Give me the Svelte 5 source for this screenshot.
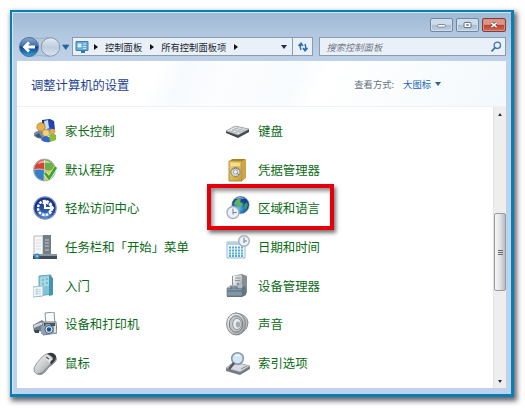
<script>
  // Control panel window, large icon view
  const crumbs = ['控制面板', '所有控制面板项'];
  const left = [
    { icon: 'family', label: '家长控制' },
    { icon: 'programs', label: '默认程序' },
    { icon: 'access', label: '轻松访问中心' },
    { icon: 'taskbar', label: '任务栏和「开始」菜单' },
    { icon: 'start', label: '入门' },
    { icon: 'printer', label: '设备和打印机' },
    { icon: 'mouse', label: '鼠标' }
  ];
  const right = [
    { icon: 'keyboard', label: '键盘' },
    { icon: 'vault', label: '凭据管理器' },
    { icon: 'region', label: '区域和语言', marked: true },
    { icon: 'date', label: '日期和时间' },
    { icon: 'device', label: '设备管理器' },
    { icon: 'sound', label: '声音' },
    { icon: 'index', label: '索引选项' }
  ];
</script>

{#snippet clock(x, y, r)}
  <circle cx={x} cy={y} {r} fill="#edf1f6" stroke="#a4b0be" stroke-width="1.4" />
  <path d="M{x} {y - r + 2}V{y}H{x + r - 2.4}M{x} {y}V{y + 2}" fill="none" stroke="#68819c" stroke-width="1" />
{/snippet}

{#snippet icon(name)}
  <svg class="icon" viewBox="0 0 24 24" aria-hidden="true">
    {#if name === 'family'}
      <path d="M9 1l8-1 4 2 1 9-5 4-8-3z" fill="url(#blue)" />
      <path d="M15 1l5 1 1 7-3 2z" fill="#2444b5" />
      <path d="M11 2l4-1 1 8-4 2z" fill="#c9dcfa" />
      <circle cx="8" cy="8" r="4.2" fill="#e6b24a" stroke="#b27a1c" stroke-width=".7" />
      <path d="M1 14q4-4 10-1l1 7q-6 1-11-3z" fill="#7e8ca5" />
      <path d="M2 16l4-2 3 5-5-.5z" fill="#465775" />
      <circle cx="13" cy="14" r="3.4" fill="#f2d37b" stroke="#c79434" stroke-width=".6" />
      <circle cx="19.5" cy="12.5" r="2.8" fill="#e4a557" />
      <path d="M9 19q4-4 8 0v4q-5 1-9-2z" fill="#3465c7" />
      <path d="M16 16q4-3 7 0v5l-6 2z" fill="#88bd34" />
    {:else if name === 'programs'}
      <circle cx="11.5" cy="12" r="11" fill="#b9c5c4" stroke="#8d9a9d" stroke-width=".7" />
      <path d="M11 1.6A10.4 10.4 0 0 0 1.2 11.5q5-2 9.8 0z" fill="#d9432e" />
      <path d="M12 1.6a10.4 10.4 0 0 1 9.7 9.4q-5 2.5-9.7.5z" fill="#6eae43" />
      <path d="M1.2 12.5a10.4 10.4 0 0 0 9.3 10l.5-10q-5-2-9.8 0z" fill="#377fc5" />
      <path d="M12 12.5q5 2 9.8-.5-1 9-9.8 10.5z" fill="#f0c62e" />
      <path d="M4 6q7-7 14-1-7-1-14 1z" fill="#fff" opacity=".55" />
      <path d="M12 15l4 5 7-11" fill="none" stroke="#e9f5df" stroke-width="4" />
      <path d="M12 15l4 5 7-11" fill="none" stroke="#38a52d" stroke-width="2.8" />
    {:else if name === 'access'}
      <circle cx="12" cy="12" r="11.2" fill="url(#blue)" stroke="#8594ba" stroke-width="1.2" />
      <circle cx="12" cy="12" r="7" fill="none" stroke="#fff" stroke-width="2.4" stroke-dasharray="2.6 1.2" />
      <circle cx="12" cy="12" r="5" fill="#234da3" opacity=".7" />
      <path d="M12 5v7h8M16 8l4 4-4 4M10 8l2-3 3 3" fill="none" stroke="#fff" stroke-width="2" />
    {:else if name === 'taskbar'}
      <path d="M1 1h9v19H1z" fill="#f5f6f7" stroke="#b5bbc0" />
      <path d="M10 0h8v20h-8z" fill="#747e86" />
      <path d="M3 5h5M3 8h5M3 11h5M3 14h5" stroke="#dde1e4" />
      <path d="M12 5h4M12 8h4M12 11h4M12 15h4" stroke="#c4cace" />
      <path d="M0 19h24v5H0z" fill="#414d59" />
      <path d="M0 19h24v2H0z" fill="#8a969e" />
      <circle cx="4" cy="21.3" r="2.7" fill="#2783be" />
      <path d="M2.8 21h2.4M4 20v2.5" stroke="#e6f5ff" stroke-width=".7" />
    {:else if name === 'start'}
      <path d="M6 2l12-1v19l-12 2z" fill="#7fc4d8" stroke="#68a6b9" />
      <path d="M7 3l9-1v10l-9 1z" fill="#a5d7e4" />
      <path d="M16 1l4 3v17l-4 1z" fill="#4695ae" />
      <path d="M9 5h2v2H9zm4-1h2v2h-2zM9 9h2v2H9zm4-1h2v2h-2z" fill="#7bbccb" />
      <path d="M0 13l10-1v10l-10 1z" fill="#f1f8fa" stroke="#9ebbc5" />
      <path d="M2 16l6-.5M2 18l6-.5M2 20l6-.5M4 14v7" stroke="#b4ced8" stroke-width=".8" />
    {:else if name === 'printer'}
      <path d="M12 1l9-1 1 12-9 1z" fill="#f8fafc" stroke="#8a949c" />
      <path d="M0 13l9-5 4 4-3 7-9 1z" fill="#727c86" />
      <path d="M1 13l8-3 2 2-10 4z" fill="#cdd3d8" />
      <path d="M10 10h13l1 11-14 2z" fill="#dce2e7" stroke="#6e7882" />
      <path d="M11 11h11v3H11z" fill="#46525e" />
      <path d="M8 14h4l1-2h4l1 2h3v8H8z" fill="#8fa3b3" />
      <circle cx="16" cy="17.5" r="4" fill="#d9e8f3" stroke="#4c5d6c" />
      <circle cx="16" cy="17.5" r="2.2" fill="#15529a" />
      <path d="M1 18h5v3H2z" fill="#384855" />
    {:else if name === 'mouse'}
      <path d="M1 17Q3 12 9 6q6-6 12-2 5 4 0 8-6 4-9 9-3 4-8 2-4-2-3-6z" fill="url(#silver)" stroke="#777" stroke-width=".7" />
      <path d="M14 3q5-3 8.5 1 2 4-2.5 8l-3 3q1-3 0-5l3-3q-3-3-6-4z" fill="#383c42" />
      <path d="M10 7l4-3 6 4-4 4q-2-4-6-5z" fill="#dfe1e3" />
      <path d="M13 6l3 2" stroke="#555c63" stroke-width="1.5" />
      <path d="M5 23q4 0 7-4l6-6" fill="none" stroke="#8d8d8f" stroke-width="1.3" />
    {:else if name === 'keyboard'}
      <path d="M0 12l9-5 14 3v3L12 19 0 14z" fill="#44484d" />
      <path d="M0 12l9-5 14 3-11 6z" fill="#e2e4e6" stroke="#969ba0" stroke-width=".6" />
      <path d="M3 12l9 2.5M6 10.5l9 2.5M8 9l10 2.5M5 13l8-5M9 14l8-5M13 14l7-4" stroke="#9da2a8" stroke-width=".6" />
    {:else if name === 'vault'}
      <path d="M3 4l3-3h13v19l-3 3H3z" fill="#a9802a" />
      <path d="M3 3h13v20H3z" fill="url(#gold)" stroke="#b18b34" />
      <path d="M16 3l4-2v19l-4 3z" fill="#cba647" />
      <path d="M5 5h9v3H5z" fill="#f4dd8c" />
      <circle cx="9.5" cy="14" r="4.6" fill="#d9d8d0" stroke="#838384" />
      <path d="M6.5 11.5q3-3 6 0M9.5 14l3.5 3" fill="none" stroke="#777d84" />
      <circle cx="9.5" cy="14" r="2" fill="#f4f5ef" stroke="#8d9194" stroke-width=".7" />
    {:else if name === 'region'}
      <circle cx="14.5" cy="9" r="8.6" fill="url(#globe)" stroke="#3772ae" stroke-width=".6" />
      <path d="M9 5q3-3 6-2l-1 3 3 2-2 3-4-1-3-2z" fill="#62b15b" />
      <path d="M20.5 6l1.5 3-2 5-2-2 1-4z" fill="#3b9b5d" />
      <path d="M9 3q5-4 10 0-5-1-10 0z" fill="#fff" opacity=".6" />
      {@render clock(7, 16.5, 6)}
    {:else if name === 'date'}
      <path d="M1 7h18v16H1z" fill="#f2f9fd" stroke="#9ab8c9" />
      <path d="M1 7h18v3H1z" fill="#b8cfdc" />
      <path d="M3 12.5h14M3 15.5h14M3 18.5h14M3 21h14" stroke="#52aed0" stroke-width="2" stroke-dasharray="2 1" />
      {@render clock(18, 6, 5.3)}
    {:else if name === 'device'}
      <path d="M6 2l10-2 5 2v17l-5 3H6z" fill="#848e94" />
      <path d="M7 2l9-1v18H7z" fill="url(#silver)" />
      <path d="M9 4h5M9 6.5h5" stroke="#8e979d" />
      <circle cx="12" cy="10" r="1" fill="#6b757d" />
      <path d="M1 14l4-3h12l3 3v7l-4 2H1z" fill="#647582" />
      <path d="M1 14h15v8H1z" fill="#8298a7" stroke="#60717e" stroke-width=".6" />
      <path d="M1 14l4-3h12l-1 3z" fill="#aebcc6" />
      <path d="M5 15v-2h6v2M1 17h15" fill="none" stroke="#566876" stroke-width="1.1" />
    {:else if name === 'sound'}
      <path d="M9 1q12 1 13 9 0 9-10 13z" fill="#b7babd" stroke="#888d91" />
      <ellipse cx="10" cy="12" rx="9.4" ry="11" fill="url(#silver)" stroke="#878b8e" stroke-width="1" />
      <ellipse cx="10" cy="12" rx="6.7" ry="8.2" fill="#c3c7ca" stroke="#777d81" />
      <ellipse cx="11" cy="12" rx="4.3" ry="5.6" fill="#e9ebed" stroke="#8c9296" />
      <ellipse cx="12" cy="12.5" rx="2.2" ry="3" fill="#a5aaae" />
    {:else if name === 'index'}
      <path d="M0 17l8-6 16 4v3l-10 6L0 20z" fill="#737b82" />
      <path d="M0 17l8-6 16 4-10 6z" fill="#d7dbdf" stroke="#92999f" stroke-width=".6" />
      <path d="M15 18l6-3" stroke="#858d94" />
      <circle cx="11.5" cy="7.5" r="5.8" fill="#cfe7f8" stroke="#8b969f" stroke-width="1.6" />
      <path d="M8 6q3-4 7-1-4-1-7 1z" fill="#fff" />
      <path d="M8 12l-5 6" stroke="#50575e" stroke-width="2.6" />
    {/if}
  </svg>
{/snippet}

<svg class="defs" aria-hidden="true">
  <defs>
    <radialGradient id="blue" cx=".5" cy=".8"><stop stop-color="#66a1e8" /><stop offset="1" stop-color="#173589" /></radialGradient>
    <radialGradient id="globe" cx=".4" cy=".7"><stop stop-color="#52c6ef" /><stop offset="1" stop-color="#124293" /></radialGradient>
    <linearGradient id="silver" x2="1" y2="1"><stop stop-color="#fff" /><stop offset="1" stop-color="#8e9296" /></linearGradient>
    <linearGradient id="gold" x2="1" y2="1"><stop stop-color="#f2d779" /><stop offset="1" stop-color="#c59d37" /></linearGradient>
    <linearGradient id="nav" x2="0" y2="1"><stop stop-color="#8eabd0" /><stop offset=".45" stop-color="#386cac" /><stop offset=".5" stop-color="#103f85" /><stop offset="1" stop-color="#34a6df" /></linearGradient>
    <linearGradient id="navoff" x2="0" y2="1"><stop stop-color="#e5edf6" /><stop offset=".5" stop-color="#becddd" /><stop offset="1" stop-color="#d9e5f1" /></linearGradient>
  </defs>
</svg>

<main>
  <section class="window">
    <div class="caption">
      <button aria-label="最小化"><svg viewBox="0 0 24 14"><rect x="7.5" y="6.5" width="9" height="3" rx="1" fill="#fff" stroke="#66758a" /></svg></button>
      <button aria-label="最大化"><svg viewBox="0 0 24 14"><rect x="8" y="4" width="8" height="6" rx="1" fill="#fff" stroke="#4c596a" /><path d="M10.5 7h3" stroke="#4c596a" stroke-width="1.5" /></svg></button>
      <button class="close" aria-label="关闭"><svg viewBox="0 0 24 14"><path d="M9 4.5l6 5M15 4.5l-6 5" stroke="#69353a" stroke-width="3.6" /><path d="M9 4.5l6 5M15 4.5l-6 5" stroke="#fff" stroke-width="2" /></svg></button>
    </div>

    <div class="toolbar">
      <svg class="nav" viewBox="0 0 54 22" aria-hidden="true">
        <path d="M11 1.5q10 2 21 0v19q-11-2-21 0z" fill="#b5c8de" stroke="#94a8c0" stroke-width=".7" />
        <circle cx="11" cy="11" r="9.5" fill="url(#nav)" stroke="#536f95" />
        <path d="M17 11H7M11 6.5L6.5 11l4.5 4.5" fill="none" stroke="#fff" stroke-width="2.8" />
        <circle cx="32.5" cy="11" r="9.2" fill="url(#navoff)" stroke="#8799ae" />
        <path d="M44.5 9h6.5l-3.2 4.5z" fill="#1b659b" stroke="#226b9d" stroke-width=".7" />
      </svg>
      <div class="address">
        <svg class="panel" viewBox="0 0 14 14"><path d="M1 1.5h12v9H1z" fill="#66add8" stroke="#4b7fa9" /><path d="M3 4h3v3H3zM8 4h3M8 6.5h3M8 8.5h3" fill="#d9f2ff" stroke="#dff4ff" stroke-width=".8" /><path d="M6 10h4v3H6z" fill="#357bac" /></svg>
        <div class="crumbs">
          {#each crumbs as crumb}
            <i class="arrow"></i><span>{crumb}</span>
          {/each}
          <i class="arrow"></i>
        </div>
        <i class="down"></i>
        <div class="refresh"><svg viewBox="0 0 14 12"><path d="M5 9Q3.5 6 5 2.5M2.5 5L5 2.2 7 5M9 3q1.5 3 0 6.5M7 7l2 2.8L11.6 7" fill="none" stroke="#2e6ead" stroke-width="1.5" /></svg></div>
      </div>
      <div class="search">
        <span>搜索控制面板</span>
        <svg viewBox="0 0 12 12"><circle cx="7.3" cy="4.3" r="3.2" fill="none" stroke="#3b75af" stroke-width="1.3" /><path d="M5 6.7L1.5 10.5" stroke="#3b75af" stroke-width="1.8" /></svg>
      </div>
    </div>

    <div class="content">
      <header>
        <h1>调整计算机的设置</h1>
        <div class="view">查看方式:<span class="mode">大图标</span><i class="down"></i></div>
      </header>
      <div class="body">
        <div class="items">
          {#each [left, right] as column}
            <div class="column">
              {#each column as item}
                <div class="item" class:marked={item.marked}>
                  {@render icon(item.icon)}
                  <span>{item.label}</span>
                </div>
              {/each}
            </div>
          {/each}
        </div>
        <div class="scroll">
          <i class="up"></i>
          <div class="thumb"><i></i><i></i><i></i></div>
          <i class="down"></i>
        </div>
      </div>
    </div>
  </section>
</main>

<style>
  :global(body){margin:0;background:#fff}
  main{box-sizing:border-box;width:525px;height:408px;padding:10px;overflow:hidden;font-family:"Noto Sans CJK SC",sans-serif}
  .defs{position:absolute;width:0;height:0}
  .window{box-sizing:border-box;width:504px;height:387px;border:2px solid #0680b3;border-right-width:3px;border-bottom-width:3px;
    padding:0 5px 6px;display:flex;flex-direction:column;background:linear-gradient(#9eb8d3 0,#b0c6df 20px,#bfd2e9 50px,#bed2ee 100%);
    box-shadow:inset 1px 1px #d2e7f7,2px 3px 5px 1px rgba(40,35,50,.7)}
  .caption{height:24px;flex:none;display:flex;justify-content:flex-end;gap:3px;padding:6px 0 0;box-sizing:border-box}
  button{box-sizing:border-box;width:23px;height:14px;padding:0;border:1px solid #73869e;border-radius:2px;
    background:linear-gradient(#cddbea 45%,#a9bcd2 50%,#c0d0e2);box-shadow:inset 0 0 0 1px #cfdeec}
  button svg{display:block;width:100%;height:100%}
  .close{width:24px;border-color:#813c3d;background:linear-gradient(#dc9688 45%,#bd3e30 50%,#d56b50);box-shadow:inset 0 0 0 1px #dd8c80}
  .toolbar{height:25px;flex:none;display:flex;align-items:flex-start}
  .nav{width:54px;height:22px;flex:none;margin-left:1px}
  .address,.search{box-sizing:border-box;height:19px;margin-top:1px;border:1px solid #8c9bae;background:#eaf0f8;display:flex;align-items:center;font-size:9.3px;line-height:16px}
  .address{width:242px;padding-left:2px;color:#20262e}
  .panel{width:14px;height:14px;margin-right:-3px}
  .crumbs{flex:1;display:flex;align-items:center;white-space:nowrap}
  .arrow{border:3px solid transparent;border-left:4px solid #111;border-right:0;margin:0 7px 0 8px}
  .down{width:0;height:0;border:3px solid transparent;border-top:4px solid #222e43;border-bottom:0}
  .address .down{margin-right:5px}
  .refresh{width:19px;height:17px;border-left:1px solid #8c9bae;display:flex;align-items:center;justify-content:center}
  .refresh svg{width:14px;height:12px}
  .search{width:187px;margin-left:6px;padding:0 3px 0 6px;justify-content:space-between;color:#727984;font-style:italic}
  .search svg{width:12px;height:12px}
  .content{flex:1;min-height:0;display:flex;flex-direction:column;background:#fff}
  header{box-sizing:border-box;height:46px;flex:none;display:flex;align-items:center;justify-content:space-between;padding:0 65px 0 14px;
    border-bottom:1px solid #edf2f6;background:linear-gradient(115deg,#fff 28%,#f7fafd 34%,#fcfdff 42%,#f8fbfd 56%,#fff 62%,#f8fbfd 85%,#f3f8fc)}
  h1{margin:3px 0 0;font-size:12.3px;line-height:18px;font-weight:400;color:#213f93}
  .view{display:flex;align-items:center;font-size:9.3px;line-height:16px;color:#66707b}
  .mode{margin-left:9px;color:#1263bd}
  .view .down{margin-left:4px;border-top-color:#1f65ae}
  .body{flex:1;min-height:0;display:flex;justify-content:space-between}
  .items{display:flex;padding:5px 0 0 16px}
  .column{width:193px}
  .item{position:relative;height:38.6px;display:flex;align-items:center;gap:8px;font-size:12.4px;line-height:18px;color:#0c6b16;white-space:nowrap}
  .icon{width:24px;height:24px;flex:none}
  /* highlight frame laid over the neighbouring rows */
  .marked::after{content:'';position:absolute;left:-19px;top:-5.2px;box-sizing:border-box;width:127px;height:46px;border:4px solid #e3000b;
    box-shadow:2px 3px 4px rgba(0,0,0,.55),inset 2px 3px 4px rgba(0,0,0,.45)}
  .scroll{box-sizing:border-box;width:13px;background:#eeefed;border-left:1px solid #e2e4e3;display:flex;flex-direction:column;align-items:center;padding:6px 0 5px}
  .up{border:2.5px solid transparent;border-bottom:3px solid #30343a;border-top:0}
  .thumb{box-sizing:border-box;width:12px;height:78px;margin-top:97px;border:1px solid #969b9f;border-radius:2px;
    background:linear-gradient(90deg,#f7f7f7,#e1e2e3 50%,#b9bcbe);display:flex;flex-direction:column;align-items:center;justify-content:center;gap:1px}
  .thumb i{width:5px;height:1px;background:#666c72}
  .scroll .down{margin-top:auto;border-width:3px 2.5px 0}
</style>
